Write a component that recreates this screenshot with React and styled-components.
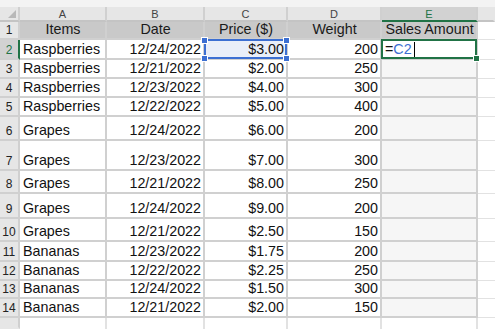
import React from 'react'
import styled, { createGlobalStyle, css } from 'styled-components'

const rows = [
    ['Raspberries', '12/24/2022', '$3.00', '200', 20],
    ['Raspberries', '12/21/2022', '$2.00', '250', 19],
    ['Raspberries', '12/23/2022', '$4.00', '300', 19],
    ['Raspberries', '12/22/2022', '$5.00', '400', 19],
    ['Grapes', '12/24/2022', '$6.00', '200', 24],
    ['Grapes', '12/23/2022', '$7.00', '300', 30],
    ['Grapes', '12/21/2022', '$8.00', '250', 23],
    ['Grapes', '12/24/2022', '$9.00', '200', 25],
    ['Grapes', '12/21/2022', '$2.50', '150', 23],
    ['Bananas', '12/23/2022', '$1.75', '200', 20],
    ['Bananas', '12/22/2022', '$2.25', '250', 19],
    ['Bananas', '12/24/2022', '$1.50', '300', 18],
    ['Bananas', '12/21/2022', '$2.00', '150', 19],
]

const columns = ['A', 'B', 'C', 'D', 'E']
const headings = ['Items', 'Date', 'Price ($)', 'Weight', 'Sales Amount']

const App = () => {
    const rowTemplate = ['7px', '15px', '18px', ...rows.map(r => r[4] + 'px'), '1fr'].join(' ')

    return (
        <>
            <GlobalStyle />
            <Sheet style={{ gridTemplateRows: rowTemplate }}>
                <TopStrip />

                <Corner><Triangle /></Corner>
                {columns.map(c => (
                    <ColHead key={c} $selected={c === 'E'}>{c}</ColHead>
                ))}
                <ColHead $last />

                <RowHead>1</RowHead>
                {headings.map(h => (
                    <Cell key={h} $align="center" $heading>{h}</Cell>
                ))}
                <Cell $spare />

                {rows.map((r, i) => (
                    <React.Fragment key={i}>
                        <RowHead $selected={i === 0}>{i + 2}</RowHead>
                        <Cell>{r[0]}</Cell>
                        <Cell $align="right">{r[1]}</Cell>
                        <Cell $align="right" $refd={i === 0}>
                            {r[2]}
                            {i === 0 && <>
                                <Handle $top $left />
                                <Handle $top />
                                <Handle $left />
                                <Handle />
                            </>}
                        </Cell>
                        <Cell $align="right">{r[3]}</Cell>
                        {i === 0 ? (
                            <Cell $active>
                                <Formula>=<Ref>C2</Ref><Caret /></Formula>
                                <FillHandle />
                            </Cell>
                        ) : (
                            <Cell $muted />
                        )}
                        <Cell $spare />
                    </React.Fragment>
                ))}

                <RowHead $open />
                {columns.map(c => <Cell key={c} $open />)}
                <Cell $spare $open />
            </Sheet>
        </>
    )
}

const GlobalStyle = createGlobalStyle`
    html, body {
        margin: 0;
        padding: 0;
        background: #ffffff;
    }
    body {
        font-family: "Liberation Sans", Arial, sans-serif;
    }
`

const Sheet = styled.div`
    display: grid;
    grid-template-columns: 20px 87px 98px 83px 94px 96px 1fr;
    width: 495px;
    height: 329px;
    overflow: hidden;
    background: #ffffff;
`

const TopStrip = styled.div`
    grid-column: 1 / -1;
    background: #f3f3f3;
`

const Corner = styled.div`
    position: relative;
    background: #e6e6e6;
    border-right: 2px solid #d0d0d0;
    border-bottom: 2px solid #c4c4c4;
`

const Triangle = styled.div`
    position: absolute;
    right: 2px;
    bottom: 2px;
    width: 0;
    height: 0;
    border-left: 8px solid transparent;
    border-bottom: 8px solid #b8b8b8;
`

const ColHead = styled.div`
    display: flex;
    align-items: center;
    justify-content: center;
    background: #e6e6e6;
    color: #444444;
    font-size: 11px;
    border-right: 2px solid ${p => (p.$last ? 'transparent' : '#d0d0d0')};
    border-bottom: 2px solid #c4c4c4;
    box-sizing: border-box;
    ${p => p.$selected && css`
        background: #d2d2d2;
        color: #217346;
        border-bottom-color: #217346;
    `}
`

const RowHead = styled.div`
    display: flex;
    align-items: flex-end;
    justify-content: center;
    padding-bottom: 1px;
    box-sizing: border-box;
    background: #e6e6e6;
    color: #222222;
    font-size: 12px;
    line-height: 14px;
    border-right: 2px solid #d0d0d0;
    border-bottom: 2px solid ${p => (p.$open ? 'transparent' : '#d0d0d0')};
    ${p => p.$selected && css`
        background: #d2d2d2;
        color: #217346;
        border-right-color: #217346;
    `}
`

const Cell = styled.div`
    position: relative;
    display: flex;
    align-items: flex-end;
    justify-content: ${p => (p.$align === 'right' ? 'flex-end' : p.$align === 'center' ? 'center' : 'flex-start')};
    padding: 0 2px 1px 3px;
    box-sizing: border-box;
    min-width: 0;
    white-space: nowrap;
    font-size: 14.3px;
    line-height: 16px;
    color: #111111;
    background: #ffffff;
    border-right: 2px solid #d0d0d0;
    border-bottom: 2px solid #d0d0d0;
    ${p => p.$heading && css`
        background: #c9c9c9;
        color: #1a1a1a;
    `}
    ${p => p.$muted && css`
        background: #f6f6f6;
    `}
    ${p => p.$refd && css`
        background: #e9eef8;
        &::after {
            content: '';
            position: absolute;
            inset: -1px -1px -1px -1px;
            border: 2px solid #3c6fd2;
            pointer-events: none;
        }
    `}
    ${p => p.$active && css`
        &::after {
            content: '';
            position: absolute;
            inset: -1px -1px -1px -1px;
            border: 2px solid #217346;
            pointer-events: none;
        }
    `}
    ${p => p.$spare && css`
        border-right: none;
        border-bottom: 1px solid #e2e2e2;
    `}
    ${p => p.$open && css`
        border-bottom: none;
        border-right-color: #e2e2e2;
    `}
`

const Handle = styled.span`
    position: absolute;
    width: 5px;
    height: 5px;
    background: #3c6fd2;
    border: 1px solid #ffffff;
    z-index: 2;
    ${p => (p.$top ? 'top: -3px;' : 'bottom: -4px;')}
    ${p => (p.$left ? 'left: -4px;' : 'right: -4px;')}
`

const FillHandle = styled.span`
    position: absolute;
    right: -4px;
    bottom: -4px;
    width: 5px;
    height: 5px;
    background: #217346;
    border: 1px solid #ffffff;
    z-index: 2;
`

const Formula = styled.span`
    display: flex;
    align-items: center;
    color: #111111;
`

const Ref = styled.span`
    color: #3c6fd2;
`

const Caret = styled.span`
    flex: 0 0 1px;
    width: 1px;
    height: 15px;
    margin-left: 2px;
    background: #000000;
`

export default App
